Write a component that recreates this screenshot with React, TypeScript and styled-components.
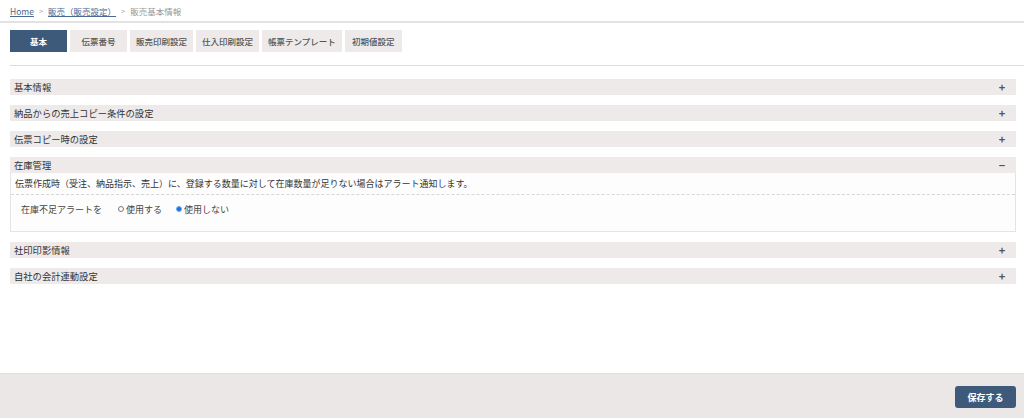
import React from "react"
import styled, { createGlobalStyle } from "styled-components"

const GlobalStyle = createGlobalStyle`
  html, body {
    margin: 0;
    padding: 0;
    background: #ffffff;
  }
  body {
    font-family: "Noto Sans CJK JP", "Noto Sans", sans-serif;
    color: #333333;
  }
`

const Page = styled.div`
  display: flex;
  flex-direction: column;
  height: 418px;
  overflow: hidden;
`

const Main = styled.div`
  flex: 1;
`

const Breadcrumb = styled.nav`
  display: flex;
  align-items: center;
  height: 21px;
  padding: 0 10px;
  font-size: 8.5px;
  color: #999999;
  border-bottom: 2px solid #e2e2e2;
`

const Crumb = styled.a`
  color: #4a6a94;
  text-decoration: underline;
`

const Sep = styled.span`
  margin: 0 5px;
  color: #aaaaaa;
  font-size: 7.5px;
`

const Tabs = styled.div`
  display: flex;
  gap: 3px;
  margin: 7px 10px 0;
`

const Tab = styled.div<{ $active?: boolean }>`
  display: flex;
  align-items: center;
  justify-content: center;
  height: 22px;
  min-width: 57px;
  padding: 0 6px;
  box-sizing: border-box;
  font-size: 8.5px;
  font-weight: ${(p) => (p.$active ? 700 : 500)};
  color: ${(p) => (p.$active ? "#ffffff" : "#555555")};
  background: ${(p) => (p.$active ? "#3e5a7a" : "#eeeaea")};
`

const Rule = styled.hr`
  margin: 13px 0 13px 10px;
  border: 0;
  border-top: 1px solid #dddddd;
`

const Sections = styled.div`
  display: flex;
  flex-direction: column;
  gap: 10px;
  margin: 0 8px 0 10px;
`

const Header = styled.div`
  display: flex;
  align-items: center;
  justify-content: space-between;
  height: 16px;
  padding: 0 10px 0 4px;
  background: #eeeaea;
  font-size: 9.3px;
  color: #333333;
`

const Toggle = styled.span`
  font-size: 11px;
  font-weight: 700;
  color: #555555;
  width: 8px;
  text-align: center;
`

const Body = styled.div`
  border: 1px solid #e4e4e4;
  border-top: 0;
  background: #fdfdfd;
`

const Desc = styled.div`
  height: 21px;
  display: flex;
  align-items: center;
  padding: 0 4px;
  font-size: 9px;
  border-bottom: 1px dashed #d6d6d6;
`

const OptionRow = styled.div`
  display: flex;
  align-items: center;
  height: 28px;
  padding: 0 10px 8px;
  font-size: 9px;
  color: #444444;
`

const OptionLabel = styled.span`
  width: 97px;
`

const RadioItem = styled.label`
  display: flex;
  align-items: center;
  gap: 2px;
  margin-right: 14px;
`

const RadioDot = styled.span<{ $checked?: boolean }>`
  width: 6px;
  height: 6px;
  border-radius: 50%;
  box-sizing: border-box;
  border: ${(p) => (p.$checked ? "1.5px solid #6aa8f0" : "1px solid #777777")};
  background: ${(p) => (p.$checked ? "#1a6fe0" : "#ffffff")};
`

const Footer = styled.footer`
  height: 45px;
  display: flex;
  justify-content: flex-end;
  align-items: flex-start;
  padding: 12px 8px 0 0;
  box-sizing: border-box;
  background: #ebe7e6;
  border-top: 1px solid #e2dedd;
`

const SaveButton = styled.button`
  width: 61px;
  height: 22px;
  border: 0;
  border-radius: 3px;
  background: #3e5a7a;
  color: #ffffff;
  font-family: inherit;
  font-size: 9px;
  font-weight: 700;
`

const tabs = ["基本", "伝票番号", "販売印刷設定", "仕入印刷設定", "帳票テンプレート", "初期値設定"]

const Section: React.FC<{ title: string; open?: boolean; children?: React.ReactNode }> = ({
  title,
  open,
  children,
}) => (
  <div>
    <Header>
      <span>{title}</span>
      <Toggle>{open ? "−" : "+"}</Toggle>
    </Header>
    {open && <Body>{children}</Body>}
  </div>
)

export default function App() {
  return (
    <Page>
      <GlobalStyle />
      <Main>
        <Breadcrumb>
          <Crumb>Home</Crumb>
          <Sep>&gt;</Sep>
          <Crumb>販売（販売設定）</Crumb>
          <Sep>&gt;</Sep>
          <span>販売基本情報</span>
        </Breadcrumb>
        <Tabs>
          {tabs.map((t, i) => (
            <Tab key={t} $active={i === 0}>
              {t}
            </Tab>
          ))}
        </Tabs>
        <Rule />
        <Sections>
          <Section title="基本情報" />
          <Section title="納品からの売上コピー条件の設定" />
          <Section title="伝票コピー時の設定" />
          <Section title="在庫管理" open>
            <Desc>
              伝票作成時（受注、納品指示、売上）に、登録する数量に対して在庫数量が足りない場合はアラート通知します。
            </Desc>
            <OptionRow>
              <OptionLabel>在庫不足アラートを</OptionLabel>
              <RadioItem>
                <RadioDot />
                使用する
              </RadioItem>
              <RadioItem>
                <RadioDot $checked />
                使用しない
              </RadioItem>
            </OptionRow>
          </Section>
          <Section title="社印印影情報" />
          <Section title="自社の会計連動設定" />
        </Sections>
      </Main>
      <Footer>
        <SaveButton>保存する</SaveButton>
      </Footer>
    </Page>
  )
}
